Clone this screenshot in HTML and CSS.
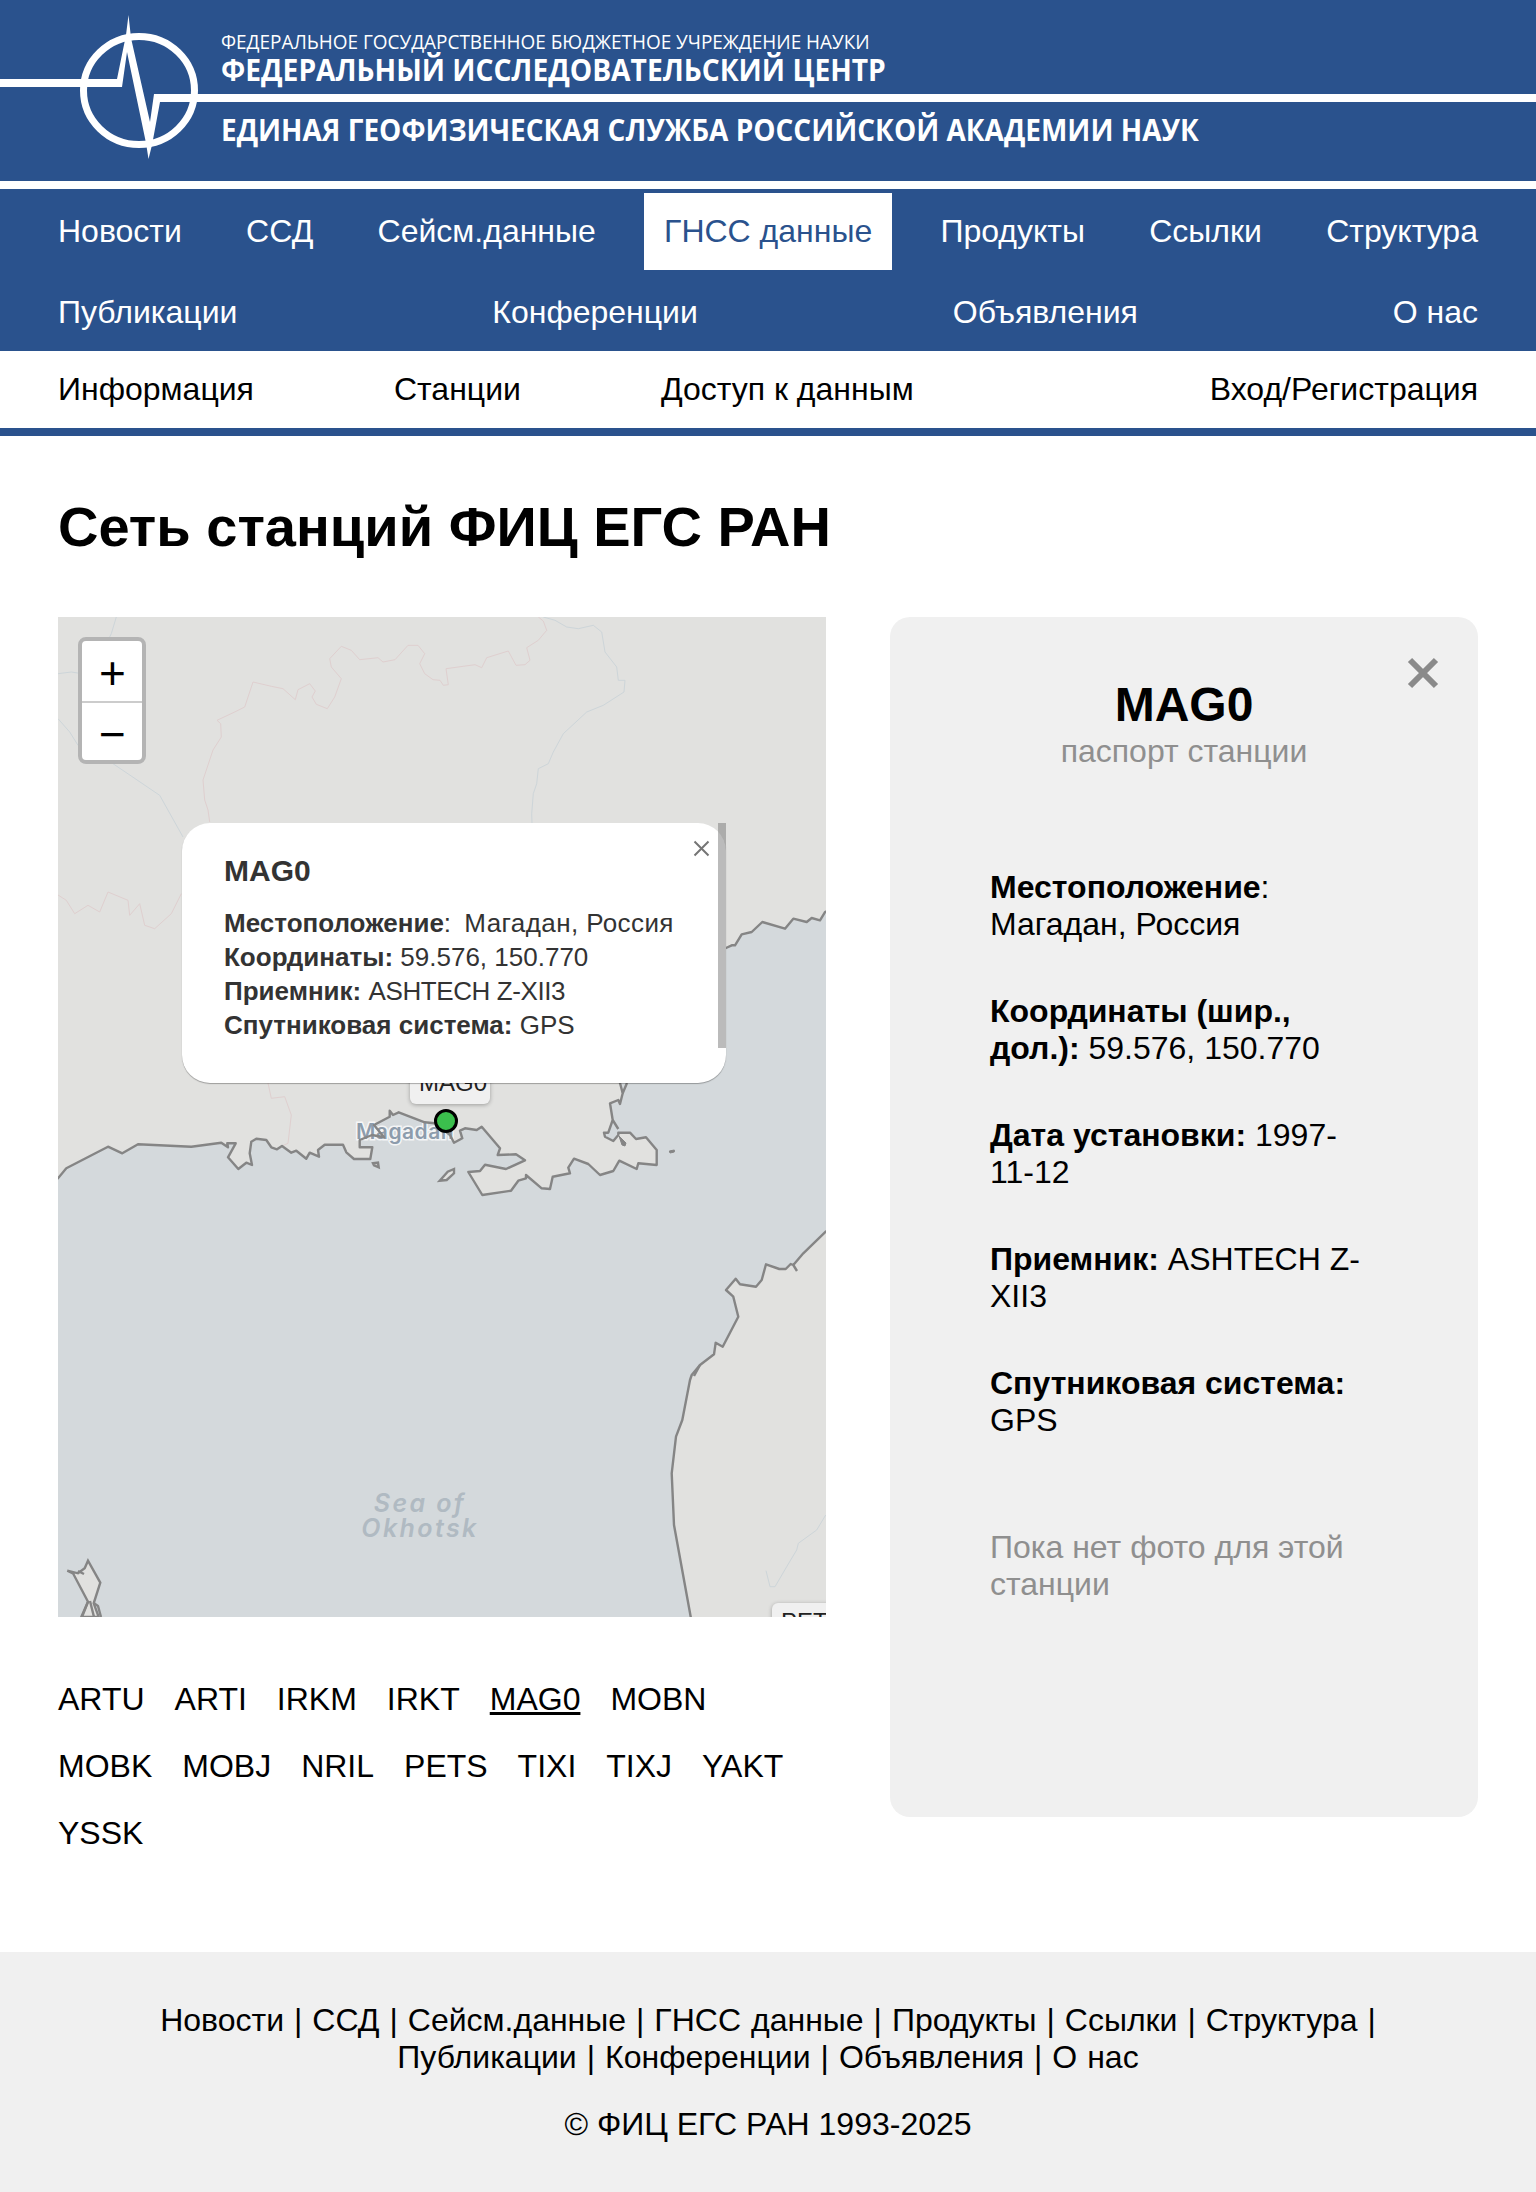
FILE: index.html
```html
<!DOCTYPE html>
<html lang="ru">
<head>
<meta charset="utf-8">
<title>Сеть станций ФИЦ ЕГС РАН</title>
<link rel="stylesheet" href="styles.css">
</head>
<body>
<header class="brand">
  <svg class="brand-mark" viewBox="0 0 1536 181" aria-hidden="true">
    <ellipse class="brand-ring" cx="139" cy="90.5" rx="55.5" ry="54"/>
    <polygon class="brand-pulse" points="0,79 117,79 126,35 128.5,15 131,38 150,122 154,94 1536,94 1536,102 160,102 152,145 148.5,159 146,143 127,52 122,87 0,87"/>
  </svg>
  <div class="brand-text">
    <div class="brand-l1">ФЕДЕРАЛЬНОЕ ГОСУДАРСТВЕННОЕ БЮДЖЕТНОЕ УЧРЕЖДЕНИЕ НАУКИ</div>
    <div class="brand-l2">ФЕДЕРАЛЬНЫЙ ИССЛЕДОВАТЕЛЬСКИЙ ЦЕНТР</div>
    <div class="brand-l3">ЕДИНАЯ ГЕОФИЗИЧЕСКАЯ СЛУЖБА РОССИЙСКОЙ АКАДЕМИИ НАУК</div>
  </div>
</header>

<nav class="mainnav">
  <a href="#">Новости</a>
  <a href="#">ССД</a>
  <a href="#">Сейсм.данные</a>
  <a href="#" class="active">ГНСС данные</a>
  <a href="#">Продукты</a>
  <a href="#">Ссылки</a>
  <a href="#">Структура</a>
  <a href="#">Публикации</a>
  <a href="#">Конференции</a>
  <a href="#">Объявления</a>
  <a href="#">О нас</a>
</nav>

<nav class="subnav">
  <a href="#">Информация</a>
  <a href="#">Станции</a>
  <a href="#">Доступ к данным</a>
  <a href="#" class="login">Вход/Регистрация</a>
</nav>

<main class="page">
  <h1 class="title">Сеть станций ФИЦ ЕГС РАН</h1>
  <div class="columns">
    <section class="left">
      <div class="map">
        <svg class="map-base" viewBox="58 617 768 1000" aria-hidden="true">
          <defs>
            <path id="coast" d="M40,1188 L58,1178.3 66.3,1168.3 108,1146.7 122.3,1153.3 138,1144.3 191.3,1146.7 221.3,1142.7 228,1147.3 227.3,1143.3 235.7,1143.3 228,1157.3 238.3,1169 246.3,1162.7 252,1165 249.7,1153.3 251.3,1141.7 256.3,1138.7 266.3,1140 271.3,1147.3 277,1149.3 282,1146 291.3,1152.7 296.3,1150.7 306.3,1158.7 309.7,1152.7 319,1156.7 318,1150 324.7,1144.7 343,1144.7 346.3,1152.3 354,1159 370.3,1159 372.3,1147.3 359.7,1147.3 359.7,1140 372,1135 384,1137.3 374,1125 389.7,1116.7 389.7,1110.7 393,1115 398.7,1112.3 424.7,1122.3 434.7,1123.3 446,1131.7 450,1135 454,1142.7 462.3,1138.3 460,1130.7 465,1128.3 476.7,1130 481.7,1126.7 500,1148.3 497.7,1155 516,1154.3 525,1160.3 506,1169 485,1164.7 480,1171 468.3,1172 482.3,1195 511,1190.7 518.3,1180.7 526,1178.3 526,1175 541.7,1188.3 550,1189 552.7,1176.7 570,1173.3 568.3,1167.7 574,1158.7 588.3,1164 600,1175 613.3,1171 619.3,1160.7 636.7,1169 638.3,1163.3 656.7,1165 656.7,1150 646,1137.3 636,1139 630,1132.7 618.3,1132.7 618.3,1135 613.3,1141 605,1136.7 604,1132.7 608.3,1132.7 612.7,1120 610,1103.3 618.3,1100 620,1104 622.7,1093.3 620,1083 640,1040 700,960 726,948 731.7,945.3 735,945.3 741.7,934.3 751.7,932 762.3,922 785,928.7 793.3,918.7 806.7,922 811.7,918 820,920.3 825,912 840,905 L840,1222 825.7,1231.7 803.3,1253.3 793.3,1265 790.7,1264 785.7,1269 779.3,1269 766,1264.3 761.7,1280 756,1286.7 740,1284.3 735.7,1278.7 726,1290 733.3,1296.7 738.3,1316.7 722.7,1346.7 715.7,1342.7 714,1354.3 700,1365 691.7,1375 690,1380 682.3,1420 676,1436.7 671.7,1473.3 674,1525 690.7,1616.7 695,1640 40,1640 Z"/>
          </defs>
          <rect class="land" x="58" y="617" width="768" height="1000"/>
          <use href="#coast" class="sea"/>
          <path class="border-pink" d="M209.7,822 L208,810 204.7,800 203,780 213,750 221.3,737 220.7,723.7 217,720.3 234.7,712 244.7,707 253,682 271.3,686.3 283,688.7 295.3,699.7 298,689.7 309.7,683.7 315.3,691 312,697 316.3,704.3 327.3,708.7 334.7,697 341.3,678.7 331.3,667 329.7,658.7 341.3,646.3 351.3,650.3 359.7,659.7 378,657.7 383,662 395,659.7 408,645.3 418,645.3 424.7,653.7 419.7,663.7 424.7,673.7 433,679.7 440,680.3 443.3,685.3 448.3,684.7 446,668.7 463.3,666.3 475,664.7 481.7,667.7 486.7,657.7 508.3,651 516,665.3 525,664.7 530,660.3 526.7,647.7 538.3,640.3 546.7,630.3 543.3,621 538.3,617"/>
          <path class="border-pink" d="M58,895 L66.3,900.3 74.7,913.7 88,905.3 99.7,912 108,892 128,900.3 129.7,915.3 139.7,903.7 144.7,925.3 154.7,928.7 171.3,913.7 181.3,893.7"/>
          <path class="border-pink" d="M268,1083 L271.3,1098.3 284.7,1096.7 291.3,1115 288,1143.3 282,1146"/>
          <path class="border-blue" d="M543.3,617 L555,620.3 566.7,627 578.3,628.7 593.3,625.3 601.7,632 605,652 616.7,667 618.3,680.3 625,680.3 624,692 603.3,705.3 586.7,712 563.3,733.7 553.3,752 548.3,763.7 538.3,768.7 536.7,783.7 533.3,793.7 531.7,813.7 532,823"/>
          <path class="border-blue" d="M116.3,617 L111.3,633.7 108,640.3"/>
          <path class="border-blue" d="M58,673.7 L71.3,672 82,673.7"/>
          <path class="border-blue" d="M58,718.7 L69.7,732 78,745.3 108,760.3 159.7,795.3 183,837"/>
          <path class="border-blue" d="M766,1570.7 L770,1586.7 775,1586.7 786.7,1566.7 796.7,1550 798.3,1543.3 816.7,1530 825.7,1515"/>
          <text class="place-label" x="356" y="1139">Magadan</text>
          <use href="#coast" class="coast-line"/>
          <path class="coast-line" d="M793.3,1265 L797,1271 M700,1365 L694,1376 M612.7,1120 L618.3,1129 M622.7,1093.3 L627,1083"/>
          <path class="coast-blob" d="M619,1136 L626,1143 625,1146 622,1145 Z"/>
          <polygon class="island" points="373,1163.3 378,1162.7 378.7,1167.3 374,1165.3"/>
          <polygon class="island" points="439.7,1180.7 447.7,1171.7 454,1169 454,1173.3 446.7,1180"/>
          <polygon class="island-dark" points="669.3,1151 674.3,1150 674.3,1152 670,1153"/>
          <polygon class="island" points="67.3,1570.7 78,1573.3 84.7,1568.3 88,1560.7 100.3,1582.7 93.7,1603.3 98.7,1617 81.3,1617 88,1601.7 73,1573.3"/>
          <path class="coast-line" d="M88,1601.7 L82,1617 M90,1601 L94,1617 M94,1603.3 L98,1606 L101,1617 M78,1571 L84,1574"/>
          <text class="sea-label" x="420" y="1512">Sea of</text>
          <text class="sea-label" x="420" y="1537">Okhotsk</text>
        </svg>

        <div class="zoom-control">
          <a href="#" class="zoom-btn">+</a>
          <a href="#" class="zoom-btn">−</a>
        </div>

        <div class="tip tip-mag">MAG0</div>
        <div class="tip tip-pets">PETS</div>
        <span class="marker"></span>

        <div class="popup">
          <svg class="popup-close" viewBox="0 0 17 17" aria-hidden="true"><path d="M1.5,1.5 L15.5,15.5 M15.5,1.5 L1.5,15.5"/></svg>
          <h3 class="popup-title">MAG0</h3>
          <div class="popup-line"><b>Местоположение</b>: <span class="popup-wide">Магадан, Россия</span></div>
          <div class="popup-line"><b>Координаты:</b> 59.576, 150.770</div>
          <div class="popup-line"><b>Приемник:</b> <span class="popup-tight">ASHTECH Z-XII3</span></div>
          <div class="popup-line"><b>Спутниковая система:</b> GPS</div>
          <span class="popup-scroll"></span>
        </div>
      </div>

      <div class="stations">
        <a href="#">ARTU</a>
        <a href="#">ARTI</a>
        <a href="#">IRKM</a>
        <a href="#">IRKT</a>
        <a href="#" class="current">MAG0</a>
        <a href="#">MOBN</a>
        <a href="#">MOBK</a>
        <a href="#">MOBJ</a>
        <a href="#">NRIL</a>
        <a href="#">PETS</a>
        <a href="#">TIXI</a>
        <a href="#">TIXJ</a>
        <a href="#">YAKT</a>
        <a href="#">YSSK</a>
      </div>
    </section>

    <aside class="passport">
      <svg class="passport-close" viewBox="0 0 32 32" aria-hidden="true"><path d="M3,3 L29,29 M29,3 L3,29"/></svg>
      <h2 class="passport-name">MAG0</h2>
      <div class="passport-sub">паспорт станции</div>
      <div class="passport-info">
        <p><b>Местоположение</b>: Магадан, Россия</p>
        <p><b>Координаты (шир., дол.):</b> 59.576, 150.770</p>
        <p><b>Дата установки:</b> 1997-11-12</p>
        <p><b>Приемник:</b> ASHTECH Z-XII3</p>
        <p><b>Спутниковая система:</b> GPS</p>
      </div>
      <p class="passport-photo">Пока нет фото для этой станции</p>
    </aside>
  </div>
</main>

<footer class="footer">
  <p class="footer-links"><a href="#">Новости</a> | <a href="#">ССД</a> | <a href="#">Сейсм.данные</a> | <a href="#">ГНСС данные</a> | <a href="#">Продукты</a> | <a href="#">Ссылки</a> | <a href="#">Структура</a> | <a href="#">Публикации</a> | <a href="#">Конференции</a> | <a href="#">Объявления</a> | <a href="#">О нас</a></p>
  <p class="copyright">© ФИЦ ЕГС РАН 1993-2025</p>
</footer>
</body>
</html>
```
FILE: styles.css
```css
* { box-sizing: border-box; }
html, body { margin: 0; padding: 0; }
body {
  font-family: "Liberation Sans", Arial, sans-serif;
  font-size: 32px;
  color: #000;
  background: #fff;
}
a { color: inherit; text-decoration: none; }

/* brand header */
.brand {
  position: relative;
  height: 181px;
  background: #2a528d;
  overflow: hidden;
}
.brand-mark {
  position: absolute;
  left: 0;
  top: 0;
  width: 1536px;
  height: 181px;
}
.brand-ring { fill: none; stroke: #fff; stroke-width: 7; }
.brand-pulse { fill: #fff; }
.brand-text {
  position: relative;
  padding: 30px 0 0 221px;
  color: #fff;
  font-family: "Open Sans", sans-serif;
  white-space: nowrap;
}
.brand-l1 {
  font-size: 20px;
  line-height: 24px;
  transform: scaleX(0.947);
  transform-origin: left center;
}
.brand-l2 {
  font-size: 30px;
  line-height: 32px;
  font-weight: 700;
  transform: scaleX(0.94);
  transform-origin: left center;
}
.brand-l3 {
  margin-top: 26px;
  font-size: 30px;
  line-height: 36px;
  font-weight: 700;
  transform: scaleX(0.933);
  transform-origin: left center;
}

/* main navigation */
.mainnav {
  margin-top: 8px;
  height: 162px;
  padding: 4px 38px 0;
  background: #2a528d;
  color: #fff;
  display: flex;
  flex-wrap: wrap;
  justify-content: space-between;
  align-content: flex-start;
  row-gap: 4px;
}
.mainnav a {
  height: 77px;
  padding: 0 20px;
  display: flex;
  align-items: center;
}
.mainnav a.active { margin: 0 4px; background: #fff; color: #2a528d; }

.subnav {
  height: 85px;
  padding: 0 58px;
  border-bottom: 8px solid #2a528d;
  display: flex;
  align-items: center;
  gap: 140px;
}
.subnav .login { margin-left: auto; }

/* page */
.page { padding: 0 58px 100px; }
.title {
  margin: 58px 0 58px;
  font-size: 56px;
  line-height: 65px;
  font-weight: 700;
}
.columns {
  display: grid;
  grid-template-columns: 768px 588px;
  column-gap: 64px;
  align-items: start;
}

/* map */
.map {
  position: relative;
  width: 768px;
  height: 1000px;
  overflow: hidden;
  background: #e1e1df;
}
.map-base {
  position: absolute;
  left: 0;
  top: 0;
  width: 768px;
  height: 1000px;
}
.land { fill: #e1e1df; }
.sea { fill: #d4d9dc; stroke: none; }
.coast-line { fill: none; stroke: #858585; stroke-width: 2.4; stroke-linejoin: round; }
.coast-blob { fill: #858585; stroke: #858585; stroke-width: 1; }
.island { fill: #e1e1df; stroke: #858585; stroke-width: 2.4; }
.island-dark { fill: #858585; stroke: #858585; stroke-width: 1; }
.border-pink { fill: none; stroke: #dfcfcf; stroke-width: 1; }
.border-blue { fill: none; stroke: #cdd5d9; stroke-width: 1; }
.place-label {
  font-family: Inter, sans-serif;
  font-size: 21px;
  font-weight: 600;
  letter-spacing: 0.5px;
  fill: #8d9cac;
  stroke: rgba(255, 255, 255, 0.75);
  stroke-width: 3px;
  paint-order: stroke;
}
.sea-label {
  font-family: Inter, sans-serif;
  font-size: 25px;
  font-weight: 600;
  font-style: italic;
  letter-spacing: 2.4px;
  fill: #b0bac2;
  text-anchor: middle;
}

.zoom-control {
  position: absolute;
  left: 20px;
  top: 20px;
  width: 68px;
  height: 127px;
  border: 4px solid #b4b4b4;
  border-radius: 8px;
  background: #fff;
  overflow: hidden;
}
.zoom-btn {
  display: flex;
  align-items: center;
  justify-content: center;
  height: 59.5px;
  padding: 5px 0 0 1px;
  font-size: 46px;
  line-height: 1;
  color: #000;
}
.zoom-btn + .zoom-btn { border-top: 2px solid #ccc; }

.marker {
  position: absolute;
  left: 376px;
  top: 492px;
  width: 24px;
  height: 24px;
  border: 3px solid #000;
  border-radius: 50%;
  background: #3bbf4d;
}
.tip {
  position: absolute;
  height: 40px;
  padding: 5px 9px 7px;
  font-size: 24px;
  line-height: 28px;
  color: #222;
  background: #f0f0f0;
  border-radius: 6px;
  box-shadow: 0 1px 4px rgba(0, 0, 0, 0.3);
  white-space: nowrap;
}
.tip-mag { left: 352px; top: 447px; width: 80px; }
.tip-pets { left: 714px; top: 986px; }

.popup {
  position: absolute;
  left: 124px;
  top: 206px;
  width: 544px;
  height: 260px;
  padding: 31px 0 0 42px;
  background: #fff;
  border-radius: 28px;
  color: #333;
  box-shadow: 0 1px 1px rgba(0, 0, 0, 0.3);
}
.popup-title {
  margin: 0 0 18px;
  font-size: 30px;
  line-height: 34px;
  font-weight: 700;
}
.popup-line { font-size: 26px; line-height: 34px; white-space: nowrap; }
.popup-wide { margin-left: 6px; letter-spacing: 0.4px; }
.popup-tight { letter-spacing: -0.4px; }
.popup-close {
  position: absolute;
  left: 511px;
  top: 17px;
  width: 17px;
  height: 17px;
}
.popup-close path { fill: none; stroke: #757575; stroke-width: 2; }
.popup-scroll {
  position: absolute;
  right: 0;
  top: 0;
  width: 8px;
  height: 225px;
  background: rgba(120, 120, 120, 0.5);
}

/* station list */
.stations {
  margin-top: 64px;
  display: flex;
  flex-wrap: wrap;
  gap: 30px;
}
.stations .current { text-decoration: underline; }

/* passport */
.passport {
  position: relative;
  height: 1200px;
  padding: 60px 100px 0;
  background: #f0f0f0;
  border-radius: 20px;
}
.passport-close {
  position: absolute;
  left: 517px;
  top: 40px;
  width: 32px;
  height: 32px;
}
.passport-close path { fill: none; stroke: #8a8a8a; stroke-width: 6; }
.passport-name {
  margin: 0;
  font-size: 48px;
  line-height: 55px;
  font-weight: 700;
  text-align: center;
}
.passport-sub {
  margin-top: 1px;
  color: #8f8f8f;
  text-align: center;
  white-space: nowrap;
}
.passport-info { margin-top: 99px; }
.passport-info p { margin: 0 0 50px; }
.passport-photo { margin: 90px 0 0; color: #8f8f8f; }

/* footer */
.footer {
  height: 241px;
  padding: 50px 100px 0;
  background: #f0f0f0;
  text-align: center;
}
.footer p { margin: 0; }
.footer-links { word-spacing: 1.1px; }
.copyright { margin-top: 30px !important; }
```
